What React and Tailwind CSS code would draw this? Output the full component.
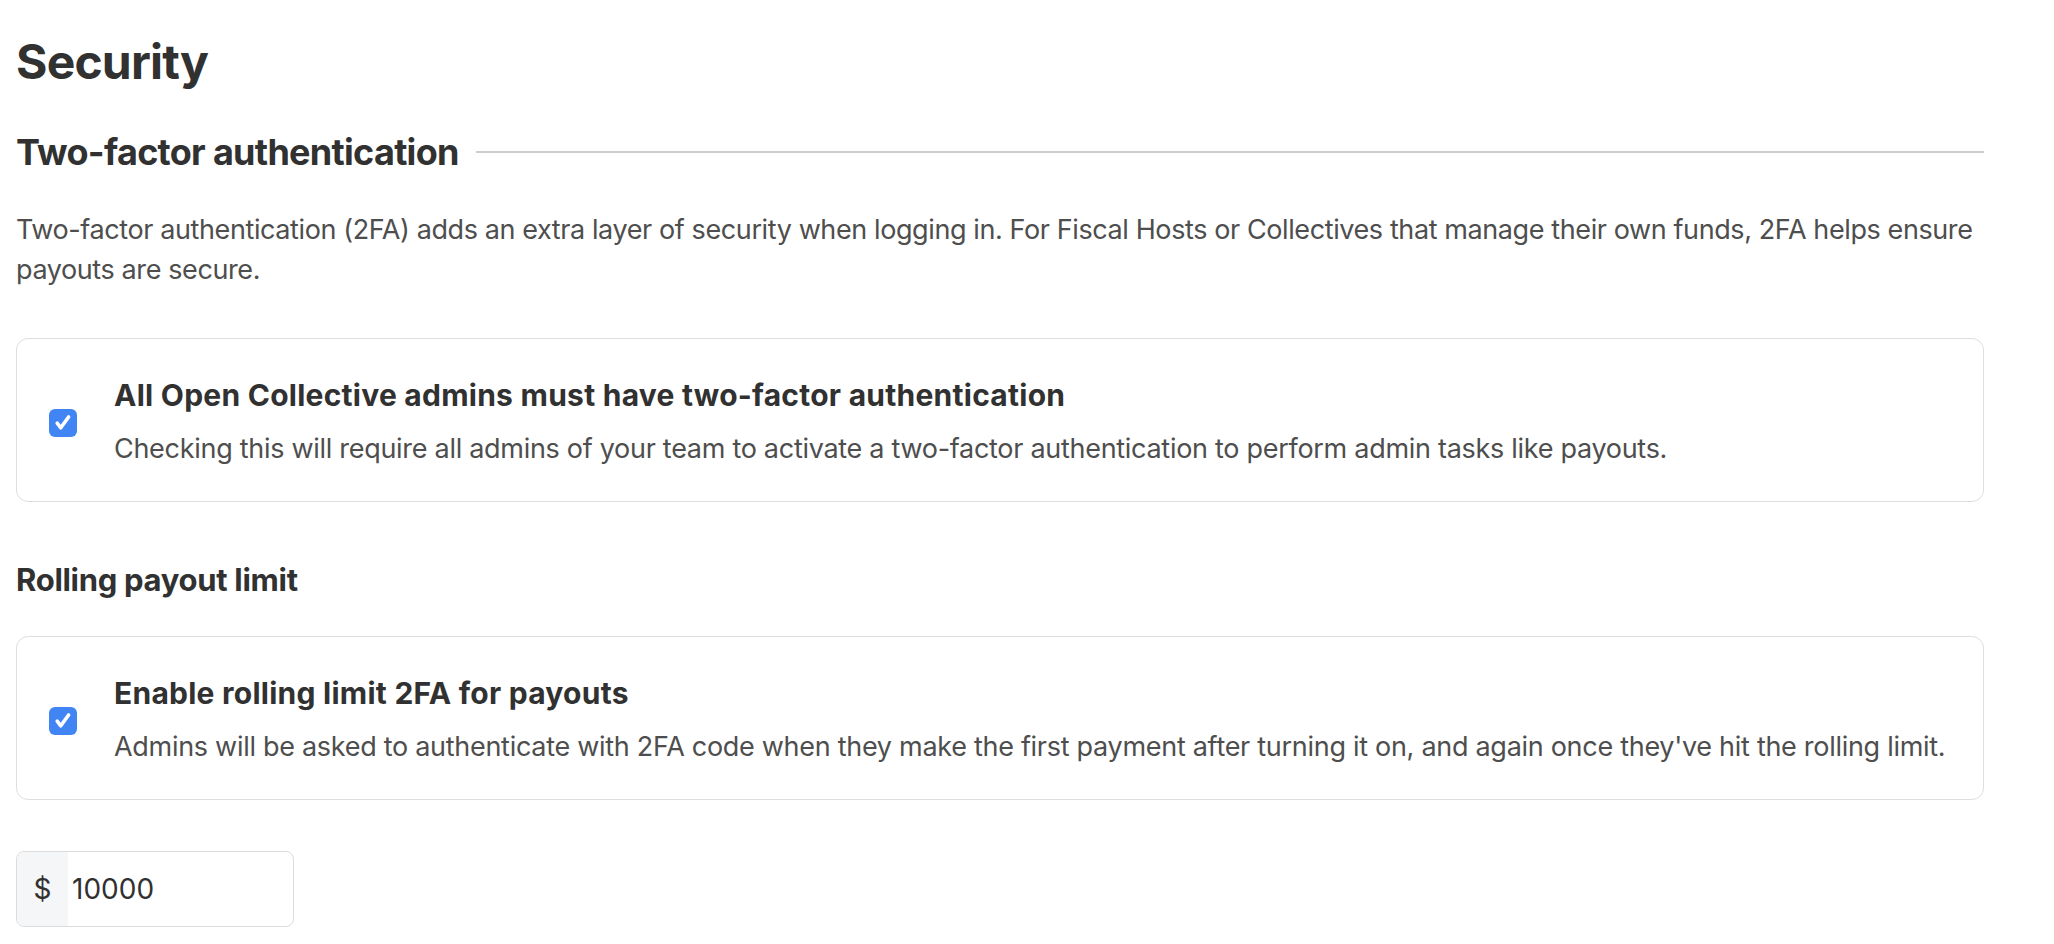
import React from "react";

const CheckBox = () => (
  <div className="w-[28px] h-[28px] shrink-0 rounded-[6px] bg-[#4184f3] flex items-center justify-center">
    <svg width="28" height="28" viewBox="0 0 28 28" fill="none">
      <path d="M8.2 14.2l3.6 4.6L19.6 8" stroke="#fff" strokeWidth="3.6" strokeLinecap="round" strokeLinejoin="round" />
    </svg>
  </div>
);

const OptionBox = ({ title, description }) => (
  <div className="flex items-center border border-[#dedede] rounded-[12px] pl-[32px] pr-6 pt-[38px] pb-[33px]">
    <CheckBox />
    <div className="ml-[37px] flex flex-col">
      <div className="text-[30px] leading-[36px] font-bold tracking-[0.25px] text-[#313131]">{title}</div>
      <div className="mt-[17px] text-[27px] leading-[38px] text-[#4e4e4e] tracking-[-0.29px]">{description}</div>
    </div>
  </div>
);

export default function App() {
  return (
    <div className="min-h-screen bg-white font-['Inter',sans-serif] text-[#313131]">
      <div className="pl-[16px] w-[1984px] pt-[38px] pb-10">
        <h1 className="text-[48px] leading-[48px] font-bold tracking-[-0.8px]">Security</h1>

        <div className="mt-[44px] flex items-center">
          <h2 className="text-[36px] leading-[44px] font-bold tracking-[-0.7px] whitespace-nowrap">
            Two-factor authentication
          </h2>
          <div className="ml-[17px] flex-1 h-[2px] bg-[#cdcdd1]" />
        </div>

        <p className="mt-[36px] text-[27px] leading-[40px] text-[#4e4e4e] tracking-[-0.4px]">
          Two-factor authentication (2FA) adds an extra layer of security when logging in. For Fiscal Hosts or
          Collectives that manage their own funds, 2FA helps ensure payouts are secure.
        </p>

        <div className="mt-[48px]">
          <OptionBox
            title="All Open Collective admins must have two-factor authentication"
            description="Checking this will require all admins of your team to activate a two-factor authentication to perform admin tasks like payouts."
          />
        </div>

        <h3 className="mt-[59px] text-[31px] leading-[38px] font-bold tracking-[-0.3px]">Rolling payout limit</h3>

        <div className="mt-[37px]">
          <OptionBox
            title="Enable rolling limit 2FA for payouts"
            description="Admins will be asked to authenticate with 2FA code when they make the first payment after turning it on, and again once they've hit the rolling limit."
          />
        </div>

        <div className="mt-[51px] flex w-[278px] h-[76px] border border-[#dcdcdc] rounded-[8px] overflow-hidden">
          <div className="w-[51px] bg-[#f5f6f8] flex items-center justify-center text-[28px] text-[#313131]">$</div>
          <div className="flex-1 flex items-center pl-[4px] text-[28px] text-[#313131]">10000</div>
        </div>
      </div>
    </div>
  );
}
